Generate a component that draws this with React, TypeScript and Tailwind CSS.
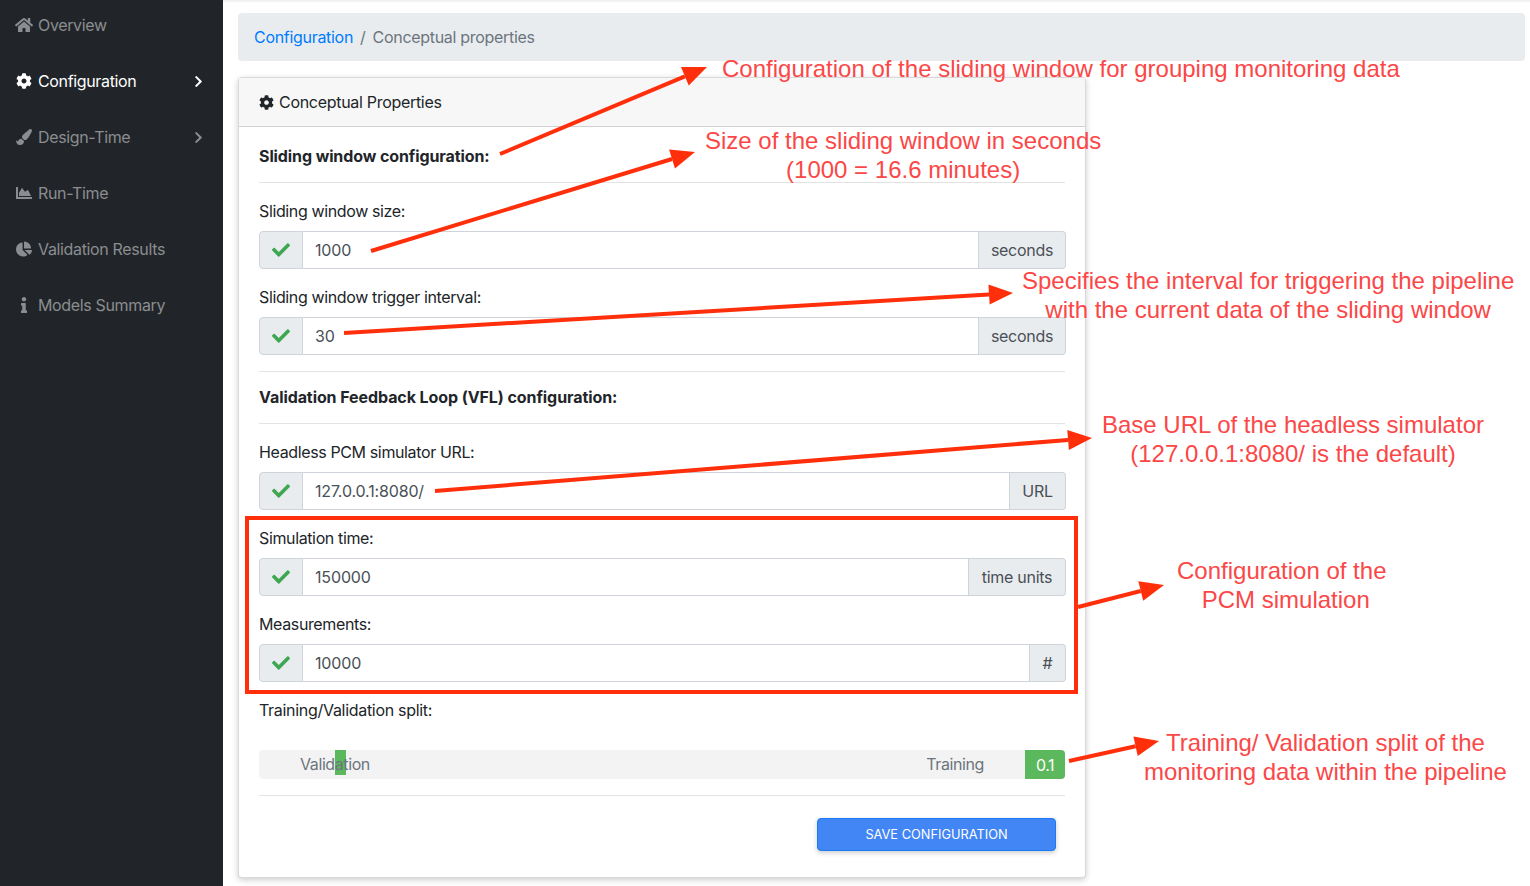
import { FaCheck, FaChartArea, FaChartPie, FaChevronRight, FaCog, FaHome, FaInfo, FaPaintBrush } from 'react-icons/fa'
import type { ReactNode } from 'react'

const navItems = [
  { label: 'Overview', icon: <FaHome className="-ml-px text-[18px]" /> },
  { label: 'Configuration', icon: <FaCog />, active: true, arrow: true },
  { label: 'Design-Time', icon: <FaPaintBrush />, arrow: true },
  { label: 'Run-Time', icon: <FaChartArea /> },
  { label: 'Validation Results', icon: <FaChartPie /> },
  { label: 'Models Summary', icon: <FaInfo /> },
]

function Sidebar() {
  return (
    <aside className="w-[223px] shrink-0 bg-[#212529]">
      <nav className="-mt-[3px] flex flex-col">
        {navItems.map((item) => (
          <a
            key={item.label}
            className={`flex h-[56px] items-center pr-[18px] pl-[16px] text-[16px] tracking-[-0.35px] ${item.active ? 'text-white' : 'text-[#8b8d90]'}`}
          >
            <span className="flex w-[22px] shrink-0 items-center text-[16px]">{item.icon}</span>
            <span className="flex-1">{item.label}</span>
            {item.arrow && <FaChevronRight className="text-[13px]" />}
          </a>
        ))}
      </nav>
    </aside>
  )
}

function Field({ label, value, unit, unitWidth }: { label: string; value: string; unit: string; unitWidth: string }) {
  return (
    <div className="mb-4">
      <label className="mb-2 block text-[16px] leading-6 tracking-[-0.37px] text-[#212529]">{label}</label>
      <div className="-mr-px flex h-[38px]">
        <span className="flex w-[44px] shrink-0 items-center justify-center rounded-l-[4px] border border-[#ced4da] bg-[#e9ecef] text-[18px] text-[#3fa652]">
          <FaCheck />
        </span>
        <div className="flex min-w-0 flex-1 items-center border-y border-r border-[#ced4da] bg-white px-3 text-[16px] tracking-[-0.15px] text-[#495057]">
          {value}
        </div>
        <span className={`flex ${unitWidth} shrink-0 items-center justify-center rounded-r-[4px] border-y border-r border-[#ced4da] bg-[#e9ecef] text-[16px] tracking-[-0.3px] text-[#495057]`}>
          {unit}
        </span>
      </div>
    </div>
  )
}

function Annotation({ className, children }: { className: string; children: ReactNode }) {
  return (
    <div className={`absolute text-center font-['Liberation_Sans',Arial,sans-serif] text-[24px] leading-[29px] whitespace-nowrap text-[#fb4747] ${className}`}>
      {children}
    </div>
  )
}

function Arrow({ x1, y1, x2, y2 }: { x1: number; y1: number; x2: number; y2: number }) {
  const a = Math.atan2(y2 - y1, x2 - x1)
  const len = 24
  const half = 10
  const bx = x2 - len * Math.cos(a)
  const by = y2 - len * Math.sin(a)
  const px = half * Math.sin(a)
  const py = half * Math.cos(a)
  return (
    <>
      <line x1={x1} y1={y1} x2={bx} y2={by} stroke="#ff2f0b" strokeWidth="4" />
      <polygon points={`${x2},${y2} ${bx + px},${by - py} ${bx - px},${by + py}`} fill="#ff2f0b" />
    </>
  )
}

function Annotations() {
  return (
    <>
      <svg className="pointer-events-none absolute top-0 left-0" width="1530" height="886">
        <Arrow x1={500} y1={154} x2={707} y2={67} />
        <Arrow x1={371} y1={251} x2={695} y2={152} />
        <Arrow x1={344} y1={333} x2={1013} y2={293} />
        <Arrow x1={435} y1={491} x2={1092} y2={438} />
        <Arrow x1={1078} y1={607} x2={1164} y2={585} />
        <Arrow x1={1069} y1={761} x2={1159} y2={741} />
      </svg>
      <div className="pointer-events-none absolute top-[516px] left-[245px] h-[178px] w-[833px] border-4 border-[#ff2f0b]" />
      <Annotation className="top-[54px] left-[722px]">Configuration of the sliding window for grouping monitoring data</Annotation>
      <Annotation className="top-[126px] left-[705px]">
        Size of the sliding window in seconds
        <br />
        (1000 = 16.6 minutes)
      </Annotation>
      <Annotation className="top-[266px] left-[1022px]">
        Specifies the interval for triggering the pipeline
        <br />
        with the current data of the sliding window
      </Annotation>
      <Annotation className="top-[410px] left-[1102px]">
        Base URL of the headless simulator
        <br />
        (127.0.0.1:8080/ is the default)
      </Annotation>
      <Annotation className="top-[556px] left-[1177px]">
        Configuration of the
        <br />
        <span className="ml-[8px]">PCM simulation</span>
      </Annotation>
      <Annotation className="top-[728px] left-[1144px]">
        Training/ Validation split of the
        <br />
        monitoring data within the pipeline
      </Annotation>
    </>
  )
}

export default function App() {
  return (
    <div className="relative flex h-[886px] w-[1530px] overflow-hidden bg-white font-['Inter',sans-serif]">
      <Sidebar />
      <main className="min-w-0 flex-1 pt-[13px] pr-[5px] pl-[15px]">
        <div className="flex h-[48px] items-center rounded-[4px] bg-[#e9ecef] px-4 text-[16px] tracking-[-0.3px] text-[#6c757d]">
          <a className="text-[#007bff]">Configuration</a>
          <span className="px-[7px]">/</span>
          <span>Conceptual properties</span>
        </div>
        <section className="mt-4 h-[801px] w-[848px] rounded-[4px] border border-black/15 bg-white shadow-[0_2px_6px_rgba(0,0,0,0.2)]">
          <header className="flex h-[49px] items-center gap-[5px] border-b border-black/15 bg-[#f7f7f7] px-5 text-[16px] tracking-[-0.3px] text-[#212529]">
            <FaCog className="text-[15px]" />
            Conceptual Properties
          </header>
          <div className="px-5 pt-[17px] text-[#212529]">
            <h6 className="text-[16px] leading-6 font-bold tracking-[-0.1px]">Sliding window configuration:</h6>
            <hr className="mt-[14px] mb-4 border-[#e3e3e3]" />
            <Field label="Sliding window size:" value="1000" unit="seconds" unitWidth="w-[87px]" />
            <Field label="Sliding window trigger interval:" value="30" unit="seconds" unitWidth="w-[87px]" />
            <hr className="border-[#e3e3e3]" />
            <h6 className="mt-[13px] text-[16px] leading-6 font-bold tracking-[-0.08px]">Validation Feedback Loop (VFL) configuration:</h6>
            <hr className="mt-[14px] mb-4 border-[#e3e3e3]" />
            <Field label="Headless PCM simulator URL:" value="127.0.0.1:8080/" unit="URL" unitWidth="w-[56px]" />
            <Field label="Simulation time:" value="150000" unit="time units" unitWidth="w-[97px]" />
            <Field label="Measurements:" value="10000" unit="#" unitWidth="w-[36px]" />
            <label className="block text-[16px] leading-6 tracking-[-0.3px]">Training/Validation split:</label>
            <div className="relative mt-7 flex h-[29px] w-[806px] items-center rounded-[4px] bg-[#f3f3f3] text-[16px] tracking-[-0.4px] text-[#6c757d]">
              <div className="absolute top-0 left-[76px] h-[25px] w-[11px] bg-[#5cb85c]" />
              <span className="relative mb-[2px] ml-[41px]">Validation</span>
              <span className="mb-[2px] ml-auto">Training</span>
              <span className="ml-[41px] flex h-full w-[40px] items-center justify-center rounded-r-[4px] bg-[#5cb85c] text-white">0.1</span>
            </div>
            <hr className="mt-4 border-[#e3e3e3]" />
            <div className="mt-[22px] flex justify-end pr-[9px]">
              <button className="h-[33px] w-[239px] rounded-[4px] border border-[#1a7cf5] bg-[#4285f4] text-[12.8px] text-white shadow-[0_2px_5px_rgba(0,0,0,0.2)]">
                SAVE CONFIGURATION
              </button>
            </div>
          </div>
        </section>
      </main>
      <div className="pointer-events-none absolute top-0 left-[223px] h-[3px] w-[1307px] bg-gradient-to-b from-[#ececec] to-white" />
      <Annotations />
    </div>
  )
}
